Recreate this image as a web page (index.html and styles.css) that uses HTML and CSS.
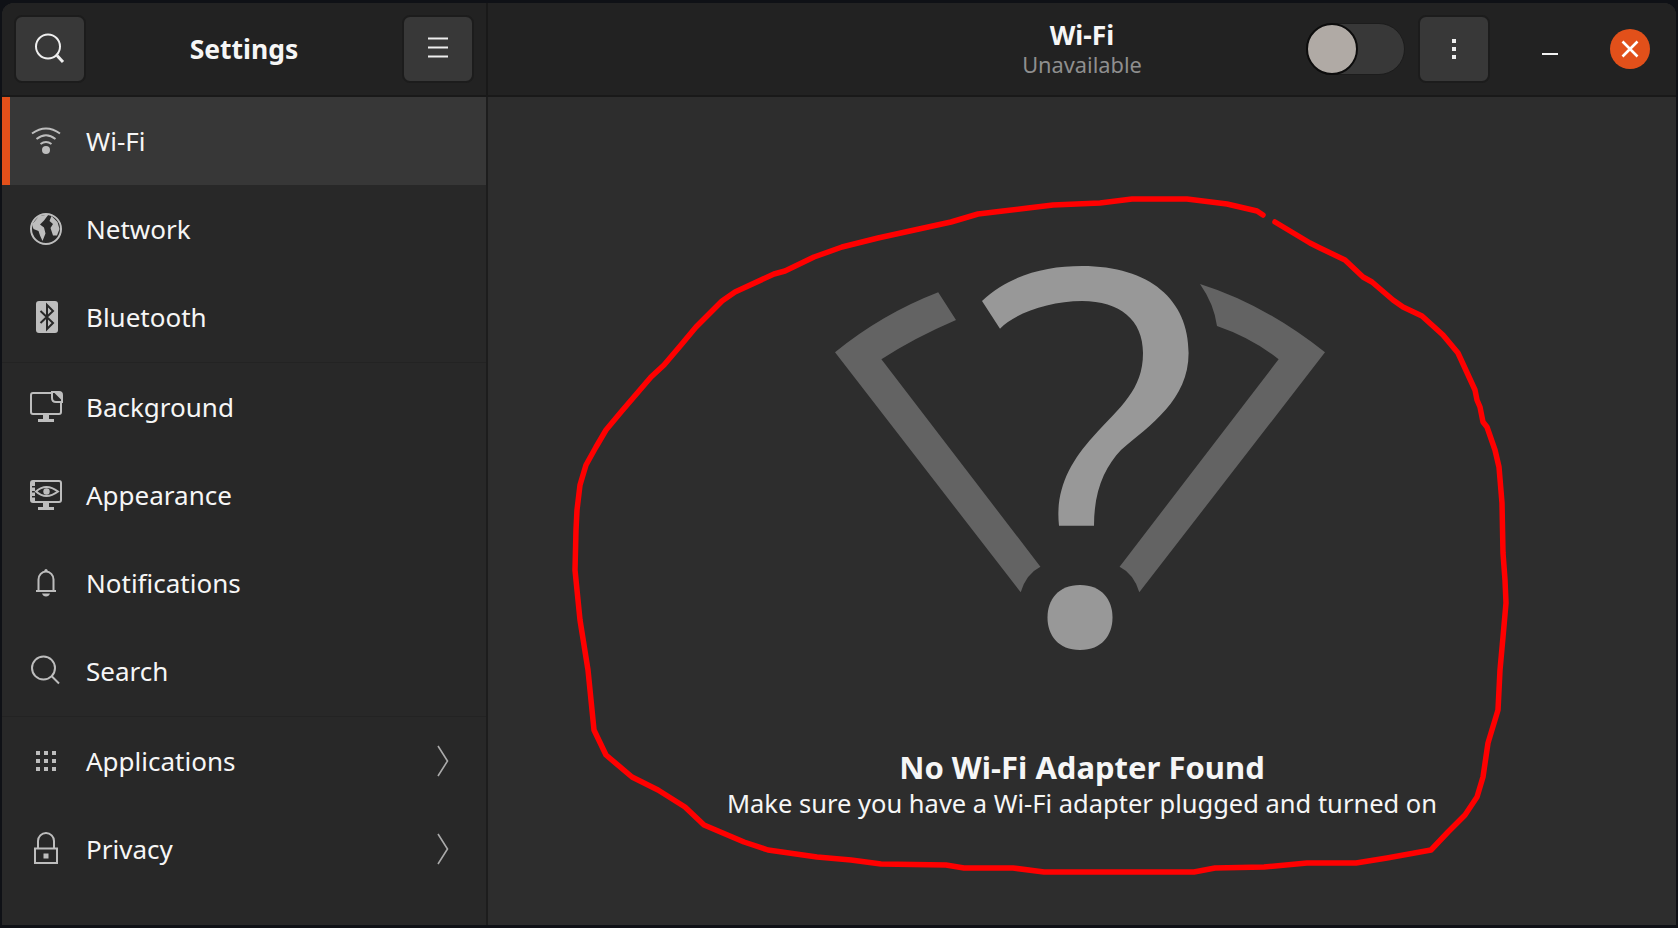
FILE: index.html
```html
<!DOCTYPE html>
<html lang="en">
<head>
    <meta charset="UTF-8">
    <title>Settings - Wi-Fi</title>
    <link rel="stylesheet" href="styles.css">
</head>
<body>
    <div class="window">
        <header class="titlebar">
            <div class="titlebar-left">
                <button class="btn">
                    <svg width="36" height="36" viewBox="0 0 36 36" class="icon-light"><circle cx="16" cy="15.5" r="12" fill="none" stroke-width="2"/><path d="M25 24.5 L31 31" fill="none" stroke-width="3"/></svg>
                </button>
                <h1 class="app-title">Settings</h1>
                <button class="btn">
                    <svg width="36" height="36" viewBox="0 0 36 36" class="icon-light"><path d="M8 7.5 H28 M8 16.5 H28 M8 25.5 H28" fill="none" stroke-width="2"/></svg>
                </button>
            </div>
            <div class="titlebar-right">
                <div class="page-title">
                    <div class="page-name">Wi-Fi</div>
                    <div class="page-status">Unavailable</div>
                </div>
                <div class="controls">
                    <div class="toggle"><span class="toggle-knob"></span></div>
                    <button class="btn">
                        <svg width="36" height="36" viewBox="0 0 36 36"><path d="M16 8h4v4h-4z M16 16h4v4h-4z M16 24h4v4h-4z" fill="#eeeeee"/></svg>
                    </button>
                    <span class="minimize"></span>
                    <span class="close">
                        <svg width="22" height="22" viewBox="0 0 22 22"><path d="M3.5 3.5 L18.5 18.5 M18.5 3.5 L3.5 18.5" stroke="#fff" stroke-width="2.6" fill="none"/></svg>
                    </span>
                </div>
            </div>
        </header>
        <div class="content">
            <nav class="sidebar">
                <div class="row selected">
                    <svg class="row-icon" viewBox="0 0 36 36"><g fill="none" stroke="#bdbdbd" stroke-width="2"><path d="M4 10.5 Q18 0.5 32 10.5"/><path d="M8.5 16 Q18 8.5 27.5 16"/><path d="M12.5 21 Q18 17 23.5 21"/></g><circle cx="18" cy="27" r="4" fill="#bdbdbd"/></svg>
                    <span>Wi-Fi</span>
                </div>
                <div class="row">
                    <svg class="row-icon" viewBox="0 0 36 36"><circle cx="18" cy="18" r="15" fill="none" stroke="#bdbdbd" stroke-width="2"/><path d="M11 5 L20.5 3.5 L16 9.5 L12 13.5 L16 16.5 L17.5 22.5 L14.5 30 L12 24.5 L10.5 20 L5.5 18 L4 13.5 Z M23.5 5 L29.5 11 L31.5 18 L29 24.5 L25 24.5 L22.5 17 L25 13 L21.5 10 Z" fill="#bdbdbd"/></svg>
                    <span>Network</span>
                </div>
                <div class="row">
                    <svg class="row-icon" viewBox="0 0 36 36"><rect x="8" y="2" width="22" height="32" rx="3" fill="#bdbdbd"/><path d="M12.5 12 L25 24 L19 30 V6 L25 12 L12.5 24" fill="none" stroke="#282828" stroke-width="2"/></svg>
                    <span>Bluetooth</span>
                </div>
                <div class="row group-start">
                    <svg class="row-icon" viewBox="0 0 36 36"><path d="M24 4 H5 Q3 4 3 6 V23 Q3 25 5 25 H31 Q33 25 33 23 V13" fill="none" stroke="#bdbdbd" stroke-width="2"/><path d="M24 3 H31 Q34 3 34 6 V13 H28 Q24 13 24 9 Z" fill="none" stroke="#bdbdbd" stroke-width="2"/><path d="M26.5 4 L33.5 11 V5 Q33.5 4 32.5 4 Z" fill="#bdbdbd"/><path d="M15 26 H21 V30 H26 V33 H10 V30 H15 Z" fill="#bdbdbd"/></svg>
                    <span>Background</span>
                </div>
                <div class="row">
                    <svg class="row-icon" viewBox="0 0 36 36"><rect x="3" y="4" width="30" height="21" rx="2" fill="none" stroke="#bdbdbd" stroke-width="2"/><path d="M3 5 H7 V9 H3 Z M3 10.5 H7 V14 H3 Z M3 15.5 H7 V19 H3 Z M3 20.5 H7 V25 H3 Z" fill="#bdbdbd"/><path d="M8 14.5 Q18 5.5 30 14.5 Q18 23.5 8 14.5 Z" fill="none" stroke="#bdbdbd" stroke-width="2"/><circle cx="18.5" cy="14.5" r="3.2" fill="#bdbdbd"/><path d="M15 26 H21 V30 H26 V33 H10 V30 H15 Z" fill="#bdbdbd"/></svg>
                    <span>Appearance</span>
                </div>
                <div class="row">
                    <svg class="row-icon" viewBox="0 0 36 36"><path d="M10.5 26 V14.5 A7.5 8 0 0 1 25.5 14.5 V26" fill="none" stroke="#bdbdbd" stroke-width="2"/><path d="M8 26 H28" stroke="#bdbdbd" stroke-width="2"/><circle cx="18" cy="5.5" r="1.6" fill="#bdbdbd"/><path d="M14 28.5 H22 Q21 31.5 18 31.5 Q15 31.5 14 28.5 Z" fill="#bdbdbd"/></svg>
                    <span>Notifications</span>
                </div>
                <div class="row">
                    <svg class="row-icon" viewBox="0 0 36 36"><circle cx="15.5" cy="15" r="11.5" fill="none" stroke="#bdbdbd" stroke-width="2"/><path d="M23.5 23 L31 30.5" stroke="#bdbdbd" stroke-width="2" fill="none"/></svg>
                    <span>Search</span>
                </div>
                <div class="row group-start">
                    <svg class="row-icon" viewBox="0 0 36 36"><path d="M8 8h4v4h-4z M16 8h4v4h-4z M24 8h4v4h-4z M8 16h4v4h-4z M16 16h4v4h-4z M24 16h4v4h-4z M8 24h4v4h-4z M16 24h4v4h-4z M24 24h4v4h-4z" fill="#bdbdbd"/></svg>
                    <span>Applications</span>
                    <svg class="chevron" viewBox="0 0 12 32"><path d="M1 1 L10.5 16 L1 31" fill="none" stroke="#aaaaaa" stroke-width="1.6"/></svg>
                </div>
                <div class="row">
                    <svg class="row-icon" viewBox="0 0 36 36"><rect x="7" y="17.5" width="22" height="14.5" fill="none" stroke="#bdbdbd" stroke-width="2"/><path d="M10 17 V10 A8 8 0 0 1 26 10 V17" fill="none" stroke="#bdbdbd" stroke-width="2"/><rect x="15.5" y="22.5" width="5" height="5" fill="#bdbdbd"/></svg>
                    <span>Privacy</span>
                    <svg class="chevron" viewBox="0 0 12 32"><path d="M1 1 L10.5 16 L1 31" fill="none" stroke="#aaaaaa" stroke-width="1.6"/></svg>
                </div>
            </nav>
            <main class="panel">
                <svg class="status-icon" width="500" height="400" viewBox="0 0 500 400">
                    <path d="M106.2 32.3 L124 60 Q82 78 49.4 99.3 L208.4 306.7 Q194 314 188.7 332.3 L3 92.3 Q50 54 106.2 32.3 Z" fill="#636363"/>
                    <path d="M368 24 Q432 44 493 92.3 L307.3 332.3 Q302 314 287.6 306.7 L446.6 99.3 Q420 78 385 66 Q382 44 368 24 Z" fill="#636363"/>
                    <path d="M150 41 C178 15 213 6 250 6 C318 6 356.6 40 356.6 93 C356.6 140 318 165 289 190 C273 207 262 230 262 265.7 L227 265.7 C223 230 238 202 261 176.7 C288 147 311 130 311 93 C311 60 288 41 250 41 C218 41 183 53 168 68.7 Z" fill="#989898"/>
                    <path d="M248 325 C270 325 280.5 340 280.5 357.5 C280.5 375 270 390 248 390 C226 390 215.5 375 215.5 357.5 C215.5 340 226 325 248 325 Z" fill="#989898"/>
                </svg>
                <h2 class="empty-title">No Wi-Fi Adapter Found</h2>
                <p class="empty-text">Make sure you have a Wi-Fi adapter plugged and turned on</p>
            </main>
        </div>
    </div>
    <!-- red marker circled by hand over the screenshot -->
    <svg class="scribble" width="1678" height="928" viewBox="0 0 1678 928">
        <polyline points="1263,215 1257,211 1227,204 1187,199 1132,199 1100,203 1053,205 1028,208 1003,211 978,214 951,222 919,229 878,238 842,247 814,257 785,271 774,274 735,292 722,301 696,327 681,345 664,365 651,377 639,391 621,412 606,430 596,447 586,465 580,485 577,510 576,530 575,570 580,620 588,670 594,730 606,755 632,777 658,790 685,807 704,825 744,842 768,850 817,857 851,860 881,864 946,865 964,868 1013,868 1044,872 1194,872 1215,868 1264,867 1307,863 1356,863 1387,858 1431,850 1448,832 1465,815 1477,797 1483,777 1488,743 1498,710 1500,670 1503,637 1506,603 1505,580 1503,553 1502,503 1499,467 1495,450 1487,427 1483,422 1480,407 1477,400 1475,390 1458,353 1443,335 1422,316 1403,307 1393,300 1372,282 1363,277 1345,260 1320,248 1310,243 1300,237 1280,225 1275,222"/>
    </svg>
</body>
</html>
```

FILE: styles.css
```css
* {
    box-sizing: border-box;
    margin: 0;
    padding: 0;
}

body {
    width: 1678px;
    height: 928px;
    padding: 3px 2px;
    background-color: #0f1116;
    font-family: 'Noto Sans', sans-serif;
    color: #f6f6f6;
    overflow: hidden;
    position: relative;
}

.window {
    height: 922px;
    display: flex;
    flex-direction: column;
    border-radius: 12px 12px 0 0;
    overflow: hidden;
    background-color: #2d2d2d;
}

/* title bar */
.titlebar {
    display: flex;
    height: 94px;
    flex-shrink: 0;
    background-color: #222222;
    border-bottom: 2px solid #191919;
}

.titlebar-left {
    width: 486px;
    display: flex;
    align-items: center;
    justify-content: space-between;
    padding: 0 12px;
    border-right: 2px solid #191919;
}

.app-title {
    font-size: 26.5px;
    font-weight: 700;
}

.titlebar-right {
    flex: 1;
    display: grid;
    grid-template-columns: 1fr auto 1fr;
    align-items: center;
}

.page-title {
    grid-column: 2;
    text-align: center;
}

.page-name {
    font-size: 26.5px;
    font-weight: 700;
    line-height: 32px;
}

.page-status {
    font-size: 21.8px;
    line-height: 28px;
    color: #8f8f8f;
}

.controls {
    grid-column: 3;
    display: flex;
    align-items: center;
    justify-content: flex-end;
    padding-right: 26px;
}

.btn {
    width: 72px;
    height: 68px;
    display: flex;
    align-items: center;
    justify-content: center;
    background-color: #383838;
    border: 2px solid #1c1c1c;
    border-radius: 8px;
}

.icon-light {
    stroke: #eeeeee;
}

.toggle {
    width: 99px;
    height: 52px;
    margin-right: 13px;
    background-color: #383838;
    border: 1px solid #1c1c1c;
    border-radius: 26px;
}

.toggle-knob {
    display: block;
    width: 52px;
    height: 52px;
    margin: -1px;
    background-color: #b0aaa5;
    border: 2px solid #0c0c0c;
    border-radius: 50%;
}

.minimize {
    width: 16px;
    height: 2px;
    margin: 10px 52px 0 52px;
    background-color: #f2f2f2;
}

.close {
    width: 40px;
    height: 40px;
    display: flex;
    align-items: center;
    justify-content: center;
    background-color: #e2501a;
    border-radius: 50%;
}

/* body */
.content {
    flex: 1;
    display: flex;
    min-height: 0;
}

.sidebar {
    width: 486px;
    flex-shrink: 0;
    background-color: #282828;
    border-right: 2px solid #1d1d1d;
}

.row {
    height: 88px;
    display: flex;
    align-items: center;
    gap: 22px;
    padding: 0 37px 0 26px;
    font-size: 26px;
}

.row.selected {
    background-color: #373737;
    border-left: 8px solid #e2501a;
    padding-left: 18px;
}

.row.group-start {
    height: 89px;
    margin-top: 1px;
    border-top: 1px solid #232323;
}

.row-icon {
    width: 36px;
    height: 36px;
    flex-shrink: 0;
}

.chevron {
    width: 12px;
    height: 32px;
    margin-left: auto;
}

/* empty state */
.panel {
    flex: 1;
    display: flex;
    flex-direction: column;
    align-items: center;
    padding-top: 163px;
    background-color: #2d2d2d;
}

.status-icon {
    flex-shrink: 0;
}

.empty-title {
    margin-top: 89px;
    font-size: 31px;
    font-weight: 700;
    line-height: 36px;
}

.empty-text {
    font-size: 25.5px;
    line-height: 36px;
}

.scribble {
    position: absolute;
    top: 0;
    left: 0;
    pointer-events: none;
}

.scribble polyline {
    fill: none;
    stroke: #ff0000;
    stroke-width: 5.5;
    stroke-linejoin: round;
    stroke-linecap: round;
}
```
